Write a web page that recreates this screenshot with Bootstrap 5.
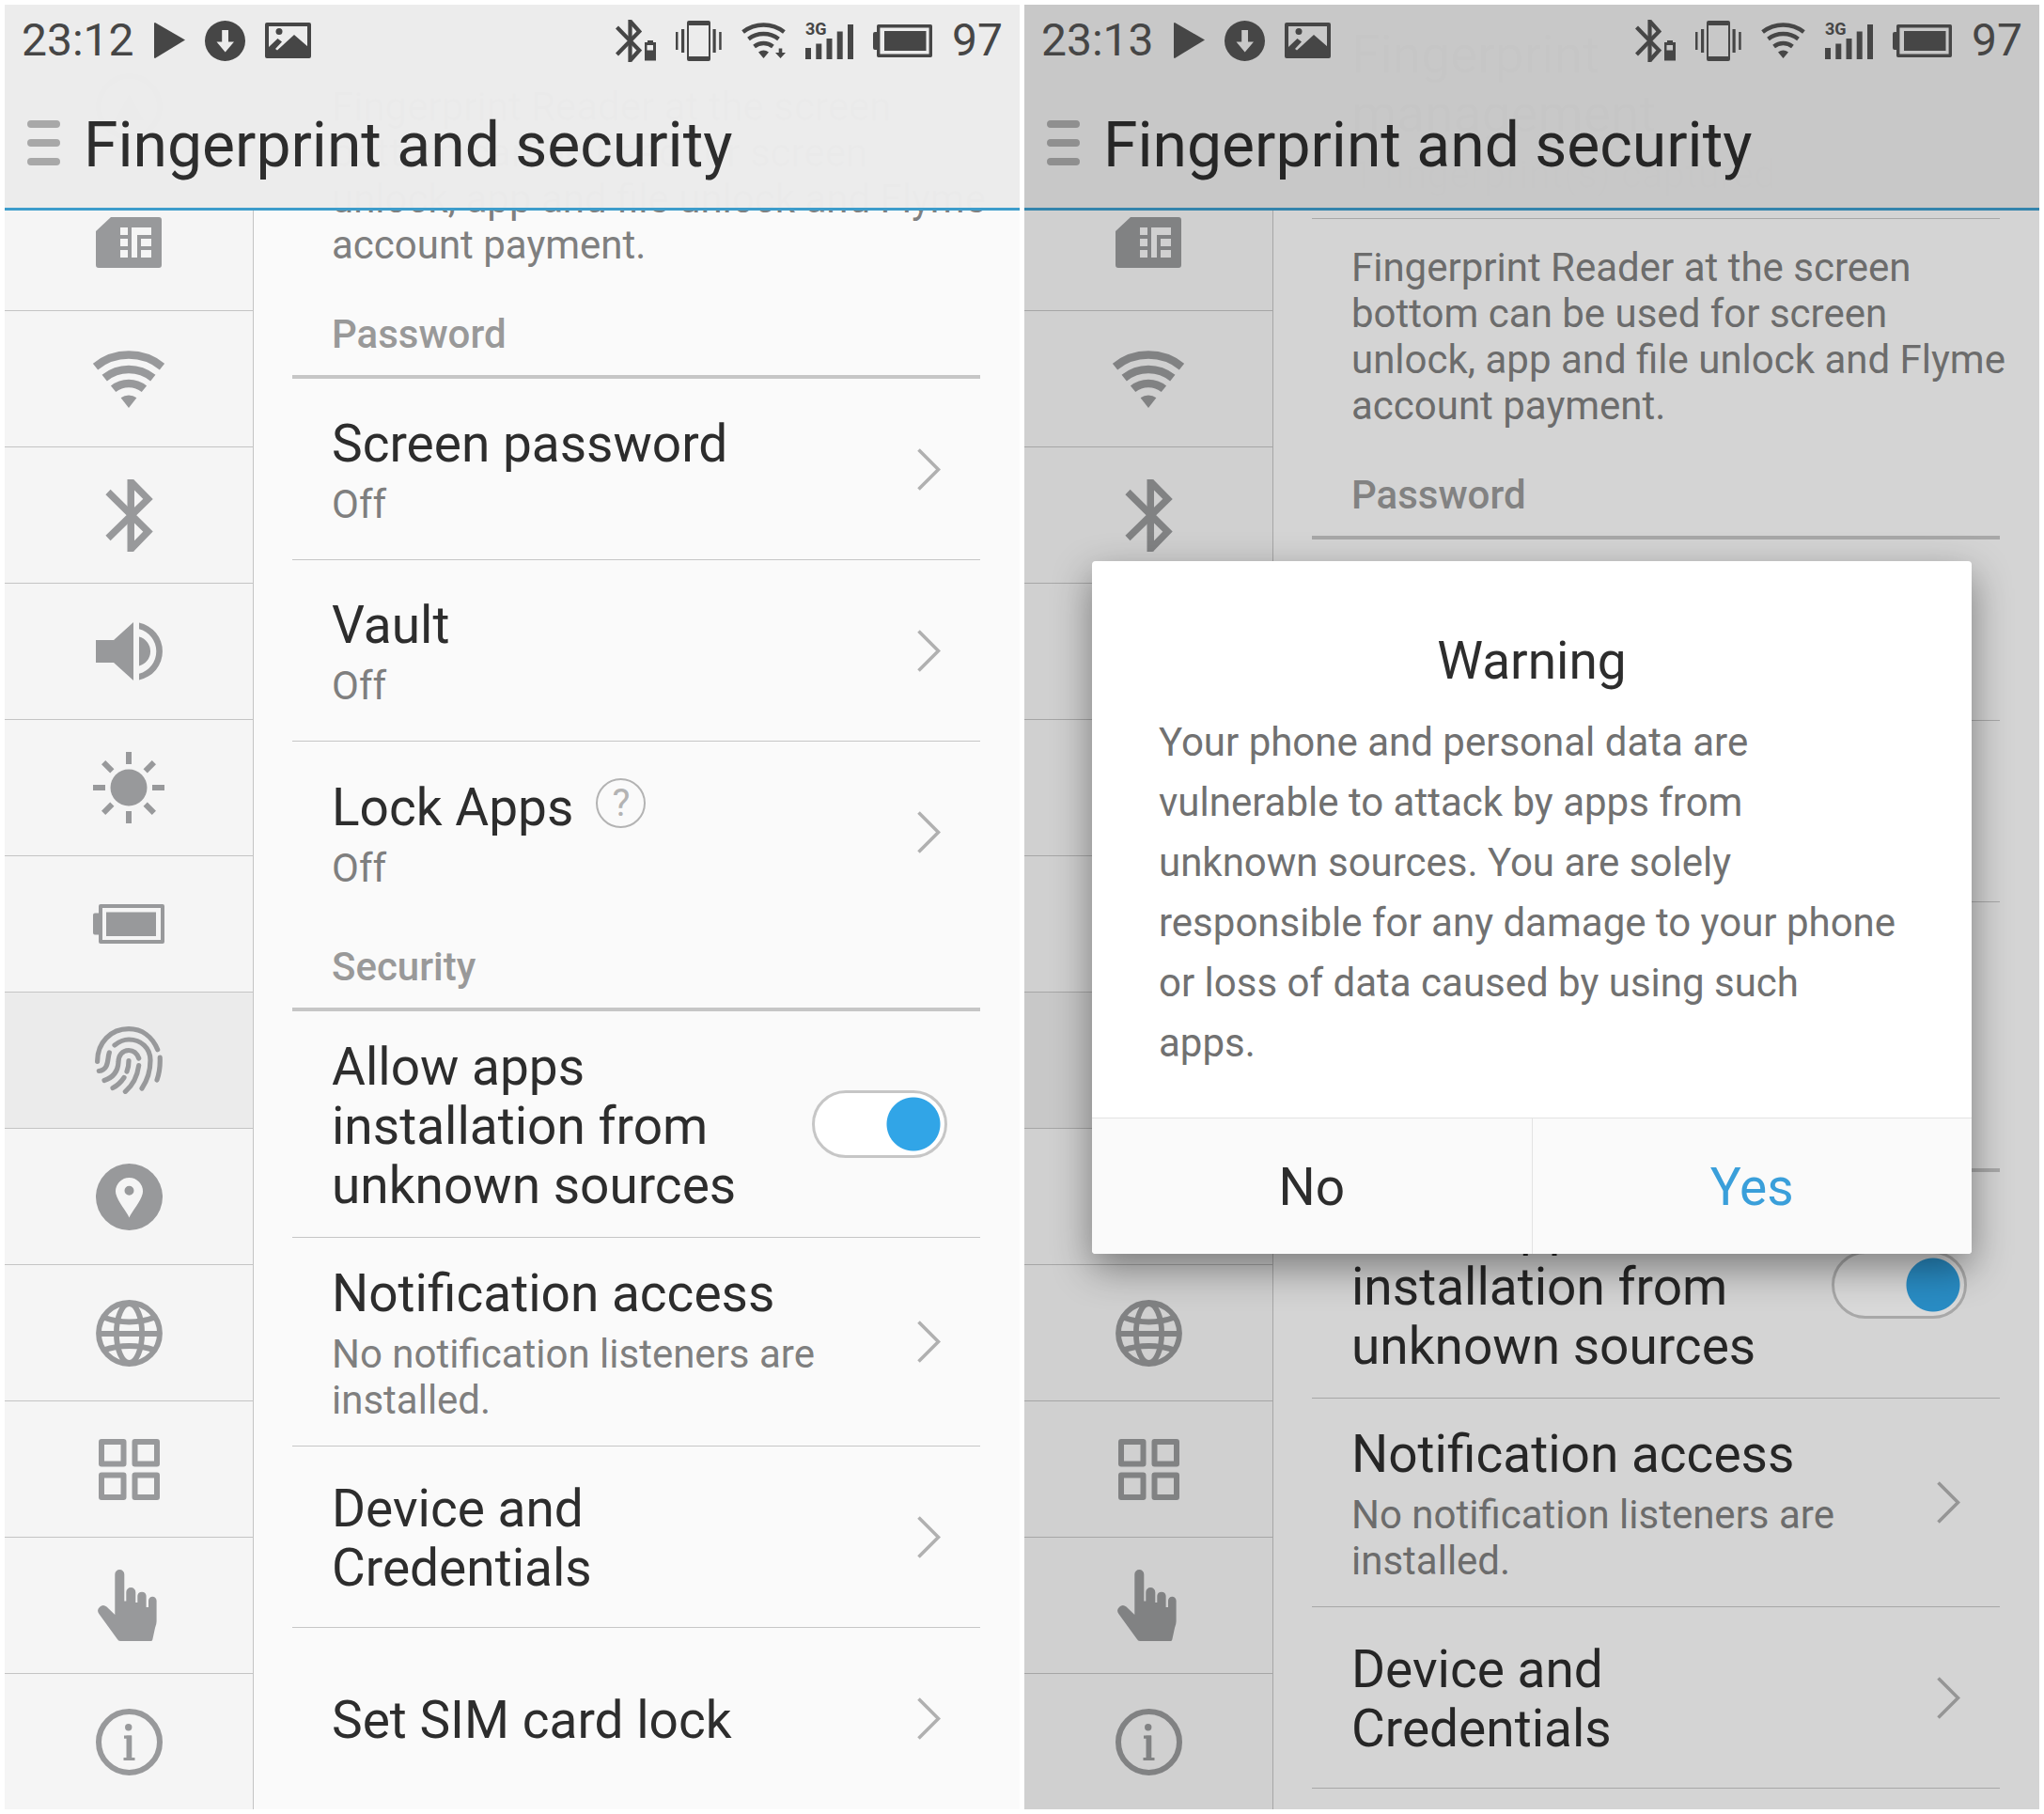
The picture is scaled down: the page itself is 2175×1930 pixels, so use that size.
<!DOCTYPE html>
<html lang="en">
<head>
<meta charset="utf-8">
<meta name="viewport" content="width=device-width, initial-scale=1">
<title>Fingerprint and security</title>
<link href="https://cdn.jsdelivr.net/npm/bootstrap@5.3.0/dist/css/bootstrap.min.css" rel="stylesheet">
<style>
  body { background: #fff; font-family: Roboto, "Liberation Sans", sans-serif; }
  a { color: inherit; text-decoration: none; }
  svg { display: block; flex: none; }
  .phones { display: grid; grid-template-columns: 1fr 1fr; gap: 5px; padding: 5px; height: 100vh; }

  /* every layer of a phone shares one grid cell */
  .phone { display: grid; grid-template: minmax(0, 1fr) / minmax(0, 1fr); overflow: hidden; background: #fafafa; }
  .phone > * { grid-area: 1 / 1; }
  .topbar { align-self: start; background: rgba(236, 236, 236, .99); border-bottom: 3px solid #3d9ccb; padding: 78px 24px 0; }
  .bar-row { height: 138px; gap: 25px; }
  .bar-title { font-size: 66px; line-height: 78px; font-weight: 400; color: #2d2d2d; margin: 0; padding-top: 6px; }
  .menu-btn { color: #a8a8a8; }
  .scrim { background: rgba(0, 0, 0, .15); }
  .statusbar { align-self: start; height: 76px; padding: 0 18px; gap: 21px; color: #464646; font-size: 48px; line-height: 56px; }

  .side { width: 265px; background: #f5f5f5; border-right: 1px solid #c4c4c4; color: #98999b; }
  .tile { height: 145px; border-bottom: 1px solid #c4c4c4; }
  .tile:last-child { height: 144px; border-bottom: 0; }
  .tile.current { background: #ebebeb; }
  .main-col { min-width: 0; }
  .scrolled { margin-bottom: -171px; }
  .setting { margin: 0 42px 0 41px; padding: 0 42px; border-bottom: 1px solid #c6c6c6; color: #2d2d2d; font-size: 55px; line-height: 63px; min-height: 193px; }
  .setting.plain { border-bottom: 0; }
  .setting-copy { padding: 4px 82px 0 0; }
  .with-switch { min-height: 241px; padding-right: 35px; }
  .with-switch .setting-copy { padding-right: 24px; }
  .tall-row { min-height: 222px; }
  .taller-row { min-height: 233px; }
  .hint { font-size: 42px; line-height: 49px; color: #7f7f7f; margin: 8px 0 0; }
  .about { font-size: 42px; line-height: 49px; color: #7f7f7f; margin: 0; padding: 27px 24px 24px 83px; }
  .group-name { margin: 0 42px 0 41px; padding: 22px 42px 19px; border-bottom: 4px solid #c6c6c6; font-size: 42px; line-height: 49px; font-weight: 500; color: #999; }
  .chev { color: #b0b0b0; }
  .help-btn { width: 53px; height: 53px; border: 2px solid #b3b3b3; border-radius: 50%; background: none; color: #b3b3b3; font-size: 40px; line-height: 49px; padding: 0; }
  .switch { appearance: none; flex: none; width: 144px; height: 72px; margin: 0; border: 3px solid #c6c6c6; border-radius: 36px; background: #fff radial-gradient(circle at calc(100% - 33px) 50%, #31a5e7 28px, #fff 29px); }

  .dialog-box { align-self: center; justify-self: center; width: 936px; max-width: 90%; background: #fff; border-radius: 4px; overflow: hidden; }
  .dialog-shade { align-self: center; justify-self: center; width: 936px; max-width: 90%; border-radius: 4px; box-shadow: 0 15px 42px rgba(0, 0, 0, .42); display: grid; }
  .dialog-shade .dialog-box { width: auto; max-width: none; justify-self: stretch; }
  .dialog-copy { padding: 75px 71px 47px; }
  .dialog-name { font-size: 55px; line-height: 63px; font-weight: 400; color: #2d2d2d; margin: 0 0 23px; }
  .dialog-text { font-size: 42px; line-height: 64px; color: #717171; margin: 0; }
  .dialog-actions { border-top: 1px solid #e3e3e3; background: #fafafa; }
  .dialog-actions button { flex: 1; height: 144px; border: 0; background: none; font-size: 55px; line-height: 63px; color: #2d2d2d; padding: 4px 0 0; }
  .dialog-actions button:first-child { border-right: 1px solid #e3e3e3; }
  .dialog-actions button:last-child { color: #3a9fda; }
</style>
<script src="https://cdn.jsdelivr.net/npm/bootstrap@5.3.0/dist/js/bootstrap.bundle.min.js"></script>
</head>
<body>

<svg width="0" height="0" class="d-none" aria-hidden="true">
  <symbol id="i-user" viewBox="0 0 71 71"><circle cx="35.5" cy="35.5" r="32.5" fill="none" stroke="currentColor" stroke-width="6"/><path fill="currentColor" d="M20 50L35.5 22 51 50z"/></symbol>
  <symbol id="i-sim" viewBox="0 0 70 54"><path fill="currentColor" fill-rule="evenodd" d="M16 0H67a3 3 0 0 1 3 3V51a3 3 0 0 1-3 3H3a3 3 0 0 1-3-3V15Zm10 11v8h8v-8zm0 12v8h8v-8zm0 12v8h8v-8zM38 11V43h6V19H59V11zM48 23v8H59v-8zm0 12v8H59v-8z"/></symbol>
  <symbol id="i-wifi" viewBox="0 0 76 61"><g fill="none" stroke="currentColor" stroke-width="8.5"><path d="M2.5 17.1A56.5 56.5 0 0 1 73.5 17.1"/><path d="M12.2 29.1A41 41 0 0 1 63.8 29.1"/><path d="M21.6 40.8A26 26 0 0 1 54.4 40.8"/></g><path fill="currentColor" d="M38 61L29.6 50.3A14 14 0 0 1 46.4 50.3Z"/></symbol>
  <symbol id="i-bt" viewBox="0 0 51 77"><path fill="currentColor" d="M23.500 0h6l1.500 1v75l-1.500 1h-6z"/><path fill="none" stroke="currentColor" stroke-width="7.400" d="M27.700 2.800L45.500 21 3 62.500M3 13.500L45.500 55.500 27.700 74"/></symbol>
  <symbol id="i-sound" viewBox="0 0 71 62"><path fill="currentColor" d="M0 19H19L40 0V62L19 43H0ZM46 15.5A16 16 0 0 1 46 46.5ZM46 .6A31 31 0 0 1 46 61.4V54.7A24.5 24.5 0 0 0 46 7.3Z"/></symbol>
  <symbol id="i-sun" viewBox="0 0 76 76"><circle cx="38" cy="38" r="19.5" fill="currentColor"/><g stroke="currentColor" stroke-width="6"><path d="M38 0V13M38 63V76M0 38H13M63 38H76"/><path transform="rotate(45 38 38)" d="M38 0V13M38 63V76M0 38H13M63 38H76"/></g></symbol>
  <symbol id="i-battery" viewBox="0 0 76 42"><path fill="currentColor" d="M2 9.5H6V32.5H2a2 2 0 0 1-2-2v-19a2 2 0 0 1 2-2zM14 8.5H67V34H14z"/><rect x="8" y="2" width="66" height="38" fill="none" stroke="currentColor" stroke-width="4" stroke-linejoin="round"/></symbol>
  <symbol id="i-finger" viewBox="0 0 72 72"><g fill="none" stroke="currentColor" stroke-width="5.2" stroke-linecap="round"><path d="M2.6 37.3C2.6 17 17 2.7 36 2.7 50 2.7 61 11 66.7 24.7"/><path d="M21 20C26 16 30 14 36 14 49 14 59 23 59 36 59 48 56 57 50 66"/><path d="M46.7 34C44.5 28 41 25.5 36 25.5 29 25.5 25 31 25 38 24.5 48 19 54.5 10 57.5"/><path d="M15.3 28C13 34 15.5 46 4.3 47.5"/><path d="M36 36.5Q36 43 34 48"/><path d="M46.7 41.5C45 54 40 63 32.3 69.4"/><path d="M31 54.5C28 59 24 63 19 65.5"/><path d="M69.2 33C69.6 42 68.5 50 66 57"/></g></symbol>
  <symbol id="i-place" viewBox="0 0 71 71"><path fill="currentColor" fill-rule="evenodd" d="M35.5 0a35.5 35.5 0 1 1 0 71a35.5 35.5 0 1 1 0-71zM35.5 57.5C38 51 50 38 50 29.5a14.5 14.5 0 0 0-29 0C21 38 33 51 35.5 57.5zM35.5 23.7a5 5 0 1 1 0 10a5 5 0 1 1 0-10z"/></symbol>
  <symbol id="i-globe" viewBox="0 0 71 71"><g fill="none" stroke="currentColor" stroke-width="5.800"><circle cx="35.5" cy="35.5" r="32.5"/><ellipse cx="35.5" cy="35.5" rx="13.600" ry="31.500"/><path d="M3 36H68M8 18.500Q35.500 28.500 63 18.500M8 53.500Q35.500 44.500 63 53.500"/></g></symbol>
  <symbol id="i-apps" viewBox="0 0 65 65"><g fill="none" stroke="currentColor" stroke-width="6" stroke-linejoin="round"><path d="M3 3H26.5V26.5H3zM38.5 3H62V26.5H38.5zM3 38.5H26.5V62H3zM38.5 38.5H62V62H38.5z"/></g></symbol>
  <symbol id="i-hand" viewBox="0 0 66 76"><path fill="currentColor" d="M18.3 48V5a5 5 0 0 1 10 0V33.5H30.3V24a5 5 0 0 1 10 0V35H42.3V27.7a4.700 4.700 0 0 1 9.300 0V40H54V33a4.300 4.300 0 0 1 8.600 0V55Q62.600 58 61 62L58.300 74.500Q58 76 56.500 76H24Q22 76 20.500 73.500L1.300 47A5.600 5.600 0 0 1 9.500 39.500Z"/></symbol>
  <symbol id="i-info" viewBox="0 0 71 71"><circle cx="35.5" cy="35.5" r="32.5" fill="none" stroke="currentColor" stroke-width="6"/><circle cx="34.7" cy="19.7" r="3.7" fill="currentColor"/><path fill="none" stroke="currentColor" stroke-width="3.2" d="M30 30.2H38M29.5 53.5H41.5"/><path stroke="currentColor" stroke-width="5.8" d="M35.4 28.6V55"/></symbol>
  <symbol id="i-chev" viewBox="0 0 25 45"><path fill="none" stroke="currentColor" stroke-width="3.6" d="M1.5 1.5L22.5 22.5 1.5 43.5"/></symbol>
  <symbol id="i-menu" viewBox="0 0 35 48"><path stroke="currentColor" stroke-width="8" stroke-linecap="round" d="M4 4H31M4 24H31M4 44H31"/></symbol>

  <symbol id="s-play" viewBox="0 0 33 38"><path fill="currentColor" d="M1 0L33 18.5 1 38q-1 0-1-1V1q0-1 1-1z"/></symbol>
  <symbol id="s-down" viewBox="0 0 43 43"><path fill="currentColor" fill-rule="evenodd" d="M21.5 0a21.5 21.5 0 1 1 0 43a21.5 21.5 0 1 1 0-43zM18.2 10V22.5H12.5L21.7 33.5 31 22.5H25V10z"/></symbol>
  <symbol id="s-image" viewBox="0 0 49 38"><rect x="2" y="2" width="45" height="34" fill="none" stroke="currentColor" stroke-width="4" stroke-linejoin="round"/><circle cx="15" cy="9.5" r="3.5" fill="currentColor"/><path fill="currentColor" d="M4 26L13.5 17 18 20.5 11 28 13 29.5 31 13 46 26V36H4z"/></symbol>
  <symbol id="s-bt" viewBox="0 0 43 45"><path fill="currentColor" d="M13.4 0h3L17.6 1V44l-1.2 1h-3z"/><path fill="none" stroke="currentColor" stroke-width="4.2" d="M15.5 1.5L25.3 12.500 1.500 37M1.500 8L25.300 32.500 15.500 43.500"/><path fill="currentColor" fill-rule="evenodd" d="M34 22h6v2h3V43.500H31V24h3zM33.500 27v5.500H40V27z"/></symbol>
  <symbol id="s-vibrate" viewBox="0 0 49 43"><path fill="currentColor" fill-rule="evenodd" d="M14 0H35a2 2 0 0 1 2 2V41a2 2 0 0 1-2 2H14a2 2 0 0 1-2-2V2a2 2 0 0 1 2-2zM14 5V38H35V5z"/><path fill="currentColor" d="M0 12h2.500V31H0zM6 9h3.200V34H6zM39.500 9h3.200V34h-3.200zM46.200 12H48.700V31H46.200z"/></symbol>
  <symbol id="s-wifi" viewBox="0 0 47 38"><g fill="none" stroke="currentColor" stroke-width="4.400"><path d="M1.600 10A35.500 35.500 0 0 1 45.400 10"/><path d="M7.500 17.500A26 26 0 0 1 39.500 17.500"/><path d="M13.600 25.400A16 16 0 0 1 33.400 25.400"/></g><path fill="currentColor" d="M23.500 38L18 31.500A9 9 0 0 1 29 31.500Z"/></symbol>
  <symbol id="s-arrow" viewBox="0 0 47 38"><path fill="currentColor" d="M39.700 27.500h3.600v4.500H47L41.500 38 36 32h3.700z"/></symbol>
  <symbol id="s-battery" viewBox="0 0 63 35"><path fill="currentColor" d="M2 8H5V27H2a2 2 0 0 1-2-2V10a2 2 0 0 1 2-2zM12 7H56.500V28H12z"/><rect x="5.700" y="1.700" width="55.600" height="31.600" fill="none" stroke="currentColor" stroke-width="3.400" stroke-linejoin="round"/></symbol>
  <symbol id="s-bars" viewBox="0 0 51 40"><path fill="currentColor" d="M0 28H6V40H0zM11.300 23.500h6V40h-6zM22.500 18h6V40h-6zM33.700 10.500h6V40h-6zM45 3h6V40H45z"/></symbol>
</svg>

<main class="phones">

  <!-- first phone -->
  <section class="phone">
    <div class="d-flex">
      <nav class="side h-100 d-flex flex-column justify-content-end flex-shrink-0" aria-label="Settings sections">
        <a href="#" class="tile d-flex flex-shrink-0 align-items-center justify-content-center" aria-label="Account"><svg width="71" height="71"><use href="#i-user"/></svg></a>
        <a href="#" class="tile d-flex flex-shrink-0 align-items-center justify-content-center" aria-label="SIM"><svg width="70" height="54"><use href="#i-sim"/></svg></a>
        <a href="#" class="tile d-flex flex-shrink-0 align-items-center justify-content-center" aria-label="Wi-Fi"><svg width="76" height="61"><use href="#i-wifi"/></svg></a>
        <a href="#" class="tile d-flex flex-shrink-0 align-items-center justify-content-center" aria-label="Bluetooth"><svg width="51" height="77"><use href="#i-bt"/></svg></a>
        <a href="#" class="tile d-flex flex-shrink-0 align-items-center justify-content-center" aria-label="Sound"><svg width="71" height="62"><use href="#i-sound"/></svg></a>
        <a href="#" class="tile d-flex flex-shrink-0 align-items-center justify-content-center" aria-label="Brightness"><svg width="76" height="76"><use href="#i-sun"/></svg></a>
        <a href="#" class="tile d-flex flex-shrink-0 align-items-center justify-content-center" aria-label="Battery"><svg width="76" height="42"><use href="#i-battery"/></svg></a>
        <a href="#" class="tile current d-flex flex-shrink-0 align-items-center justify-content-center" aria-label="Security" aria-current="page"><svg width="72" height="72"><use href="#i-finger"/></svg></a>
        <a href="#" class="tile d-flex flex-shrink-0 align-items-center justify-content-center" aria-label="Location"><svg width="71" height="71"><use href="#i-place"/></svg></a>
        <a href="#" class="tile d-flex flex-shrink-0 align-items-center justify-content-center" aria-label="Language"><svg width="71" height="71"><use href="#i-globe"/></svg></a>
        <a href="#" class="tile d-flex flex-shrink-0 align-items-center justify-content-center" aria-label="Apps"><svg width="65" height="65"><use href="#i-apps"/></svg></a>
        <a href="#" class="tile d-flex flex-shrink-0 align-items-center justify-content-center" aria-label="Accessibility"><svg width="66" height="76"><use href="#i-hand"/></svg></a>
        <a href="#" class="tile d-flex flex-shrink-0 align-items-center justify-content-center" aria-label="About"><svg width="71" height="71"><use href="#i-info"/></svg></a>
      </nav>
      <div class="main-col flex-grow-1 d-flex flex-column justify-content-end">
        <div class="flex-shrink-0">
          <p class="about">Fingerprint Reader at the screen bottom can be used for screen unlock, app and file unlock and Flyme account payment.</p>
          <h2 class="group-name">Password</h2>
          <div class="setting d-flex align-items-center">
            <div class="setting-copy flex-grow-1"><a href="#">Screen password</a><p class="hint">Off</p></div>
            <svg class="chev" width="25" height="45"><use href="#i-chev"/></svg>
          </div>
          <div class="setting d-flex align-items-center">
            <div class="setting-copy flex-grow-1"><a href="#">Vault</a><p class="hint">Off</p></div>
            <svg class="chev" width="25" height="45"><use href="#i-chev"/></svg>
          </div>
          <div class="setting plain d-flex align-items-center">
            <div class="setting-copy flex-grow-1">
              <div class="d-flex align-items-start gap-4"><a href="#">Lock Apps</a><button type="button" class="help-btn" aria-label="Help">?</button></div>
              <p class="hint">Off</p>
            </div>
            <svg class="chev" width="25" height="45"><use href="#i-chev"/></svg>
          </div>
          <h2 class="group-name">Security</h2>
          <div class="setting with-switch d-flex align-items-center">
            <label class="setting-copy flex-grow-1" for="unknown-a">Allow apps installation from unknown sources</label>
            <input class="switch" type="checkbox" role="switch" id="unknown-a" checked>
          </div>
          <div class="setting tall-row d-flex align-items-center">
            <div class="setting-copy flex-grow-1"><a href="#">Notification access</a><p class="hint">No notification listeners are installed.</p></div>
            <svg class="chev" width="25" height="45"><use href="#i-chev"/></svg>
          </div>
          <div class="setting d-flex align-items-center">
            <div class="setting-copy flex-grow-1"><a href="#">Device and Credentials</a></div>
            <svg class="chev" width="25" height="45"><use href="#i-chev"/></svg>
          </div>
          <div class="setting plain d-flex align-items-center">
            <div class="setting-copy flex-grow-1"><a href="#">Set SIM card lock</a></div>
            <svg class="chev" width="25" height="45"><use href="#i-chev"/></svg>
          </div>
        </div>
      </div>
    </div>
    <header class="topbar">
      <div class="bar-row d-flex align-items-center">
        <button type="button" class="menu-btn border-0 bg-transparent p-0" aria-label="Menu"><svg width="35" height="48"><use href="#i-menu"/></svg></button>
        <h1 class="bar-title">Fingerprint and security</h1>
      </div>
    </header>
    <div class="statusbar d-flex align-items-center">
      <span>23:12</span>
      <svg width="33" height="38"><use href="#s-play"/></svg>
      <svg width="43" height="43"><use href="#s-down"/></svg>
      <svg class="me-auto" width="49" height="38"><use href="#s-image"/></svg>
      <svg width="43" height="45"><use href="#s-bt"/></svg>
      <svg width="49" height="43"><use href="#s-vibrate"/></svg>
      <svg width="47" height="38"><use href="#s-wifi"/><use href="#s-arrow"/></svg>
      <svg width="51" height="40" overflow="visible"><use href="#s-bars"/><text x="0" y="14" font-size="18" font-weight="700" fill="currentColor">3G</text></svg>
      <svg width="63" height="35"><use href="#s-battery"/></svg>
      <span>97</span>
    </div>
  </section>

  <!-- second phone, with the warning open -->
  <section class="phone">
    <div class="d-flex">
      <nav class="side h-100 d-flex flex-column justify-content-end flex-shrink-0" aria-label="Settings sections">
        <a href="#" class="tile d-flex flex-shrink-0 align-items-center justify-content-center" aria-label="Account"><svg width="71" height="71"><use href="#i-user"/></svg></a>
        <a href="#" class="tile d-flex flex-shrink-0 align-items-center justify-content-center" aria-label="SIM"><svg width="70" height="54"><use href="#i-sim"/></svg></a>
        <a href="#" class="tile d-flex flex-shrink-0 align-items-center justify-content-center" aria-label="Wi-Fi"><svg width="76" height="61"><use href="#i-wifi"/></svg></a>
        <a href="#" class="tile d-flex flex-shrink-0 align-items-center justify-content-center" aria-label="Bluetooth"><svg width="51" height="77"><use href="#i-bt"/></svg></a>
        <a href="#" class="tile d-flex flex-shrink-0 align-items-center justify-content-center" aria-label="Sound"></a>
        <a href="#" class="tile d-flex flex-shrink-0 align-items-center justify-content-center" aria-label="Brightness"></a>
        <a href="#" class="tile d-flex flex-shrink-0 align-items-center justify-content-center" aria-label="Battery"></a>
        <a href="#" class="tile current d-flex flex-shrink-0 align-items-center justify-content-center" aria-label="Security" aria-current="page"></a>
        <a href="#" class="tile d-flex flex-shrink-0 align-items-center justify-content-center" aria-label="Location"></a>
        <a href="#" class="tile d-flex flex-shrink-0 align-items-center justify-content-center" aria-label="Language"><svg width="71" height="71"><use href="#i-globe"/></svg></a>
        <a href="#" class="tile d-flex flex-shrink-0 align-items-center justify-content-center" aria-label="Apps"><svg width="65" height="65"><use href="#i-apps"/></svg></a>
        <a href="#" class="tile d-flex flex-shrink-0 align-items-center justify-content-center" aria-label="Accessibility"><svg width="66" height="76"><use href="#i-hand"/></svg></a>
        <a href="#" class="tile d-flex flex-shrink-0 align-items-center justify-content-center" aria-label="About"><svg width="71" height="71"><use href="#i-info"/></svg></a>
      </nav>
      <div class="main-col flex-grow-1 d-flex flex-column justify-content-end">
        <div class="scrolled flex-shrink-0">
          <div class="setting taller-row d-flex align-items-center">
            <div class="setting-copy flex-grow-1"><a href="#">Fingerprint management</a><p class="hint">1 fingerprint(s) captured</p></div>
            <svg class="chev" width="25" height="45"><use href="#i-chev"/></svg>
          </div>
          <p class="about">Fingerprint Reader at the screen bottom can be used for screen unlock, app and file unlock and Flyme account payment.</p>
          <h2 class="group-name">Password</h2>
          <div class="setting"></div>
          <div class="setting"></div>
          <div class="setting plain"></div>
          <h2 class="group-name">Security</h2>
          <div class="setting with-switch d-flex align-items-center">
            <label class="setting-copy flex-grow-1" for="unknown-b">Allow apps installation from unknown sources</label>
            <input class="switch" type="checkbox" role="switch" id="unknown-b" checked>
          </div>
          <div class="setting tall-row d-flex align-items-center">
            <div class="setting-copy flex-grow-1"><a href="#">Notification access</a><p class="hint">No notification listeners are installed.</p></div>
            <svg class="chev" width="25" height="45"><use href="#i-chev"/></svg>
          </div>
          <div class="setting d-flex align-items-center">
            <div class="setting-copy flex-grow-1"><a href="#">Device and Credentials</a></div>
            <svg class="chev" width="25" height="45"><use href="#i-chev"/></svg>
          </div>
          <div class="setting plain"></div>
        </div>
      </div>
    </div>
    <header class="topbar">
      <div class="bar-row d-flex align-items-center">
        <button type="button" class="menu-btn border-0 bg-transparent p-0" aria-label="Menu"><svg width="35" height="48"><use href="#i-menu"/></svg></button>
        <h1 class="bar-title">Fingerprint and security</h1>
      </div>
    </header>
    <div class="scrim"></div>
    <div class="statusbar d-flex align-items-center">
      <span>23:13</span>
      <svg width="33" height="38"><use href="#s-play"/></svg>
      <svg width="43" height="43"><use href="#s-down"/></svg>
      <svg class="me-auto" width="49" height="38"><use href="#s-image"/></svg>
      <svg width="43" height="45"><use href="#s-bt"/></svg>
      <svg width="49" height="43"><use href="#s-vibrate"/></svg>
      <svg width="47" height="38"><use href="#s-wifi"/></svg>
      <svg width="51" height="40" overflow="visible"><use href="#s-bars"/><text x="0" y="14" font-size="18" font-weight="700" fill="currentColor">3G</text></svg>
      <svg width="63" height="35"><use href="#s-battery"/></svg>
      <span>97</span>
    </div>
    <div class="dialog-shade">
      <div class="dialog-box" role="alertdialog" aria-labelledby="warn-name" aria-describedby="warn-text">
        <div class="dialog-copy">
          <h2 class="dialog-name text-center" id="warn-name">Warning</h2>
          <p class="dialog-text" id="warn-text">Your phone and personal data are vulnerable to attack by apps from unknown sources. You are solely responsible for any damage to your phone or loss of data caused by using such apps.</p>
        </div>
        <div class="dialog-actions d-flex">
          <button type="button">No</button>
          <button type="button">Yes</button>
        </div>
      </div>
    </div>
  </section>

</main>
</body>
</html>
